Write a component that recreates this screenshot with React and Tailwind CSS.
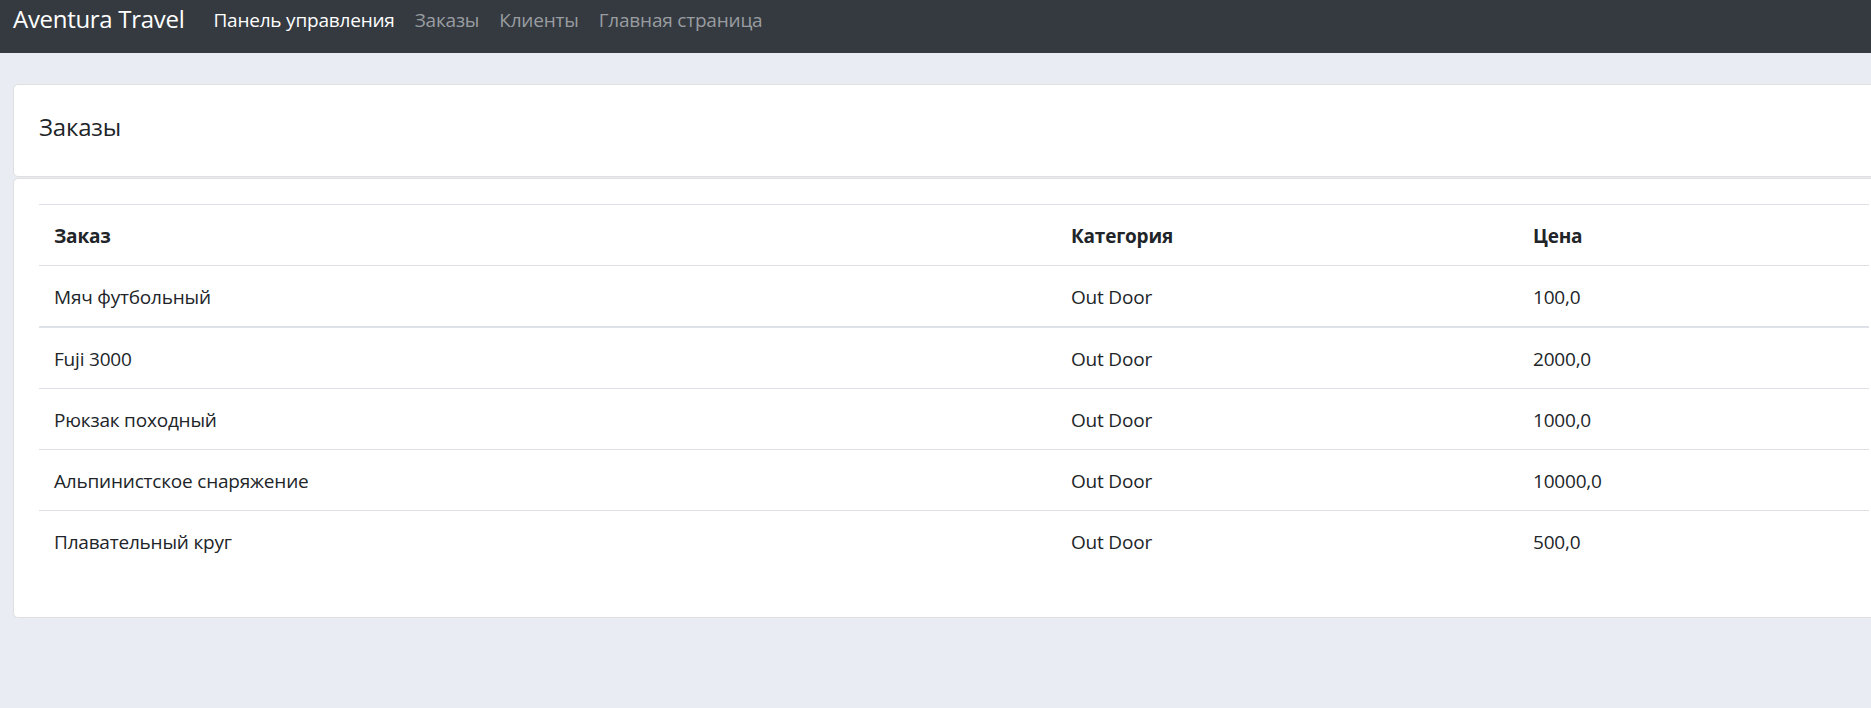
import React from "react";

const rows = [
  ["Мяч футбольный", "Out Door", "100,0"],
  ["Fuji 3000", "Out Door", "2000,0"],
  ["Рюкзак походный", "Out Door", "1000,0"],
  ["Альпинистское снаряжение", "Out Door", "10000,0"],
  ["Плавательный круг", "Out Door", "500,0"],
];

export default function App() {
  return (
    <div
      className="w-full h-[708px] overflow-hidden bg-[#e9ecf3] text-[#212529]"
      style={{ fontFamily: '"Open Sans", "Noto Sans", sans-serif' }}
    >
      <nav className="h-[53px] bg-[#343a40] flex items-start pl-[13px]">
        <a className="text-[24px] tracking-[-0.3px] leading-[37px] text-white mr-[19px]">Aventura Travel</a>
        <ul className="flex items-start mt-[5px]">
          <li className="px-[10px] text-[19px] tracking-[-0.2px] leading-[30px] text-white">Панель управления</li>
          <li className="px-[10px] text-[19px] tracking-[-0.2px] leading-[30px] text-[#9a9da0]">Заказы</li>
          <li className="px-[10px] text-[19px] tracking-[-0.2px] leading-[30px] text-[#9a9da0]">Клиенты</li>
          <li className="px-[10px] text-[19px] tracking-[-0.2px] leading-[30px] text-[#9a9da0]">Главная страница</li>
        </ul>
      </nav>

      <div className="pl-[13px] pt-[31px]">
        <div className="w-[1882px] h-[93px] bg-white border border-[#dfdfdf] rounded-[5px] pl-[25px] pt-[27px]">
          <h5 className="text-[24px] tracking-[-0.2px] leading-[30px] font-normal">Заказы</h5>
        </div>
        <div className="w-[1882px] mt-px bg-white border border-[#dfdfdf] rounded-[5px] px-[25px] pt-[25px] pb-[26px]">
          <table className="w-[1830px] table-fixed border-collapse mb-[20px] text-[19px] tracking-[-0.2px] leading-[30px]">
            <colgroup>
              <col className="w-[1017px]" />
              <col className="w-[462px]" />
              <col className="w-[351px]" />
            </colgroup>
            <thead>
              <tr className="border-t border-[#dee2e6]">
                <th className="text-left font-bold pl-[15px] pt-[16px] pb-[14px]">Заказ</th>
                <th className="text-left font-bold pl-[15px] pt-[16px] pb-[14px]">Категория</th>
                <th className="text-left font-bold pl-[15px] pt-[16px] pb-[14px]">Цена</th>
              </tr>
            </thead>
            <tbody>
              {rows.map((r, i) => (
                <tr
                  key={i}
                  className={
                    i === 1
                      ? "border-t-2 border-[#dee2e6]"
                      : "border-t border-[#dee2e6]"
                  }
                >
                  <td className="pl-[15px] pt-[16px] pb-[14px]">{r[0]}</td>
                  <td className="pl-[15px] pt-[16px] pb-[14px]">{r[1]}</td>
                  <td className="pl-[15px] pt-[16px] pb-[14px]">{r[2]}</td>
                </tr>
              ))}
            </tbody>
          </table>
        </div>
      </div>
    </div>
  );
}
